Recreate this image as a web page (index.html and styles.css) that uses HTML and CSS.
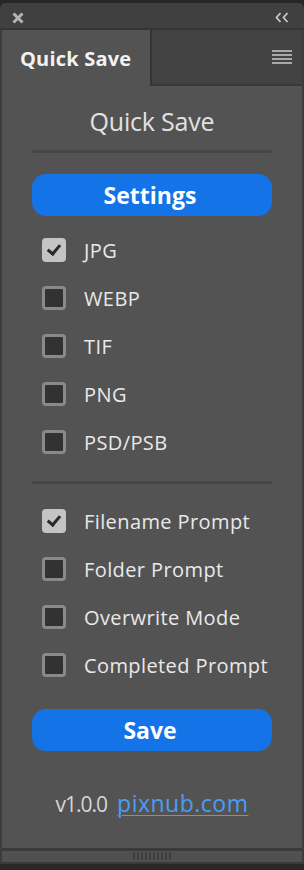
FILE: index.html
```
<!DOCTYPE html>
<html>
<head>
<meta charset="utf-8">
<link rel="stylesheet" href="styles.css">
</head>
<body>
<div class="panel">
  <div class="titlebar">
    <svg class="close" width="12" height="12" viewBox="0 0 12 12"><path d="M1.5 1.5L10.5 10.5M10.5 1.5L1.5 10.5" stroke="#b4b4b4" stroke-width="3"/></svg>
    <svg class="collapse" width="14" height="11" viewBox="0 0 14 11"><path d="M5.5 1L1.5 5.5L5.5 10M12.5 1L8.5 5.5L12.5 10" stroke="#c8c8c8" stroke-width="1.8" fill="none"/></svg>
  </div>
  <div class="tabbar">
    <div class="tab">Quick Save</div>
    <div class="tabrest">
      <div class="menu"><span></span><span></span><span></span><span></span></div>
    </div>
  </div>
  <div class="content">
    <h1 class="heading">Quick Save</h1>
    <div class="divider"></div>
    <button class="btn btn-first">Settings</button>
    <div class="group">
      <label class="row"><span class="box checked"></span><span class="lbl">JPG</span></label>
      <label class="row"><span class="box"></span><span class="lbl">WEBP</span></label>
      <label class="row"><span class="box"></span><span class="lbl">TIF</span></label>
      <label class="row"><span class="box"></span><span class="lbl">PNG</span></label>
      <label class="row"><span class="box"></span><span class="lbl">PSD/PSB</span></label>
    </div>
    <div class="divider divider2"></div>
    <div class="group group2">
      <label class="row"><span class="box checked"></span><span class="lbl">Filename Prompt</span></label>
      <label class="row"><span class="box"></span><span class="lbl">Folder Prompt</span></label>
      <label class="row"><span class="box"></span><span class="lbl">Overwrite Mode</span></label>
      <label class="row"><span class="box"></span><span class="lbl">Completed Prompt</span></label>
    </div>
    <button class="btn btn-save">Save</button>
    <div class="version"><span class="ver">v1.0.0</span><a class="link" href="#">pixnub.com</a></div>
  </div>
  <div class="bottomline"></div>
  <div class="grip"><div class="griplines"><span></span><span></span><span></span><span></span><span></span><span></span><span></span><span></span><span></span><span></span></div></div>
</div>
</body>
</html>
```
FILE: styles.css
```
html, body {
  margin: 0;
  padding: 0;
  background: #272727;
  width: 304px;
  height: 870px;
  overflow: hidden;
  font-family: "Open Sans", Lato, sans-serif;
}
.panel {
  margin-top: 3px;
  width: 304px;
  height: 861px;
  display: flex;
  flex-direction: column;
  box-sizing: border-box;
  border-radius: 6px 6px 0 0;
  overflow: hidden;
  background: #3c3c3c;
}
.titlebar {
  height: 25px;
  background: #404040;
  display: flex;
  align-items: center;
  justify-content: space-between;
  padding: 0 15px 0 12px;
  border-bottom: 2px solid #353535;
}
.close { margin-top: 4px; }
.collapse { margin-top: 3px; }
.tabbar {
  height: 56px;
  display: flex;
}
.tab {
  width: 148px;
  margin-left: 2px;
  background: #535353;
  color: #f2f2f2;
  font-weight: 700;
  font-size: 20px;
  letter-spacing: 0.2px;
  display: flex;
  align-items: center;
  padding-left: 18px;
  box-sizing: border-box;
}
.tabrest {
  flex: 1;
  background: #424242;
  border-left: 2px solid #353535;
  border-bottom: 2px solid #383838;
  margin-right: 2px;
  display: flex;
  justify-content: flex-end;
  padding-top: 20px;
  padding-right: 10px;
}
.menu {
  display: flex;
  flex-direction: column;
  gap: 2px;
}
.menu span {
  display: block;
  width: 20px;
  height: 2px;
  background: #a8a8a8;
}
.content {
  flex: 1;
  background: #535353;
  margin: 0 2px;
  padding: 0 30px;
  display: flex;
  flex-direction: column;
}
.heading {
  margin: 20px 0 0;
  font-weight: 400;
  font-size: 25px;
  line-height: 30px;
  text-align: center;
  color: #e2e2e2;
  letter-spacing: -0.2px;
}
.divider {
  height: 3px;
  border-radius: 2px;
  background: #464646;
  margin-top: 14px;
}
.btn {
  border: none;
  height: 42px;
  border-radius: 14px;
  background: #1473e6;
  color: #ffffff;
  font-family: "Open Sans", Lato, sans-serif;
  font-weight: 700;
  font-size: 23px;
  letter-spacing: 0;
  padding: 0 4px 0 0;
}
.btn-first { margin-top: 21px; }
.group {
  margin-top: 10px;
  display: flex;
  flex-direction: column;
}
.row {
  height: 48px;
  display: flex;
  align-items: center;
  padding-left: 10px;
}
.box {
  width: 24px;
  height: 24px;
  box-sizing: border-box;
  border-radius: 4px;
  border: 3px solid #8a8a8a;
  background: #323232;
  flex: none;
  position: relative;
}
.box.checked {
  background: #c4c4c4;
  border-color: #c4c4c4;
}
.box.checked::after {
  content: "";
  position: absolute;
  left: 5px;
  top: 1px;
  width: 5px;
  height: 10px;
  border-right: 3px solid #2a2a2a;
  border-bottom: 3px solid #2a2a2a;
  transform: rotate(40deg);
}
.lbl {
  margin-left: 18px;
  font-size: 20px;
  letter-spacing: 0.4px;
  color: #e9e9e9;
}
.divider2 { margin-top: 15px; }
.group2 { margin-top: 13px; }
.btn-save { margin-top: 20px; }
.version {
  margin-top: 38px;
  display: flex;
  justify-content: center;
  align-items: baseline;
  gap: 10px;
  line-height: 28px;
}
.ver { color: #d6d6d6; letter-spacing: -1px; font-size: 21px; }
.link {
  color: #4a9ef2;
  font-size: 23px;
  letter-spacing: 0.5px;
  text-decoration: underline;
  text-decoration-thickness: 1px;
  text-underline-offset: 3px;
}
.bottomline {
  height: 3px;
  background: #3a3a3a;
  margin: 0 2px;
}
.grip {
  height: 13px;
  background: #505050;
  margin: 0 2px;
  display: flex;
  justify-content: center;
  padding-top: 1px;
  box-sizing: border-box;
  border-bottom: 2px solid #3a3a3a;
}
.griplines {
  display: flex;
  gap: 2px;
  height: 8px;
}
.griplines span {
  width: 2px;
  height: 8px;
  background: #3e3e3e;
}
```
